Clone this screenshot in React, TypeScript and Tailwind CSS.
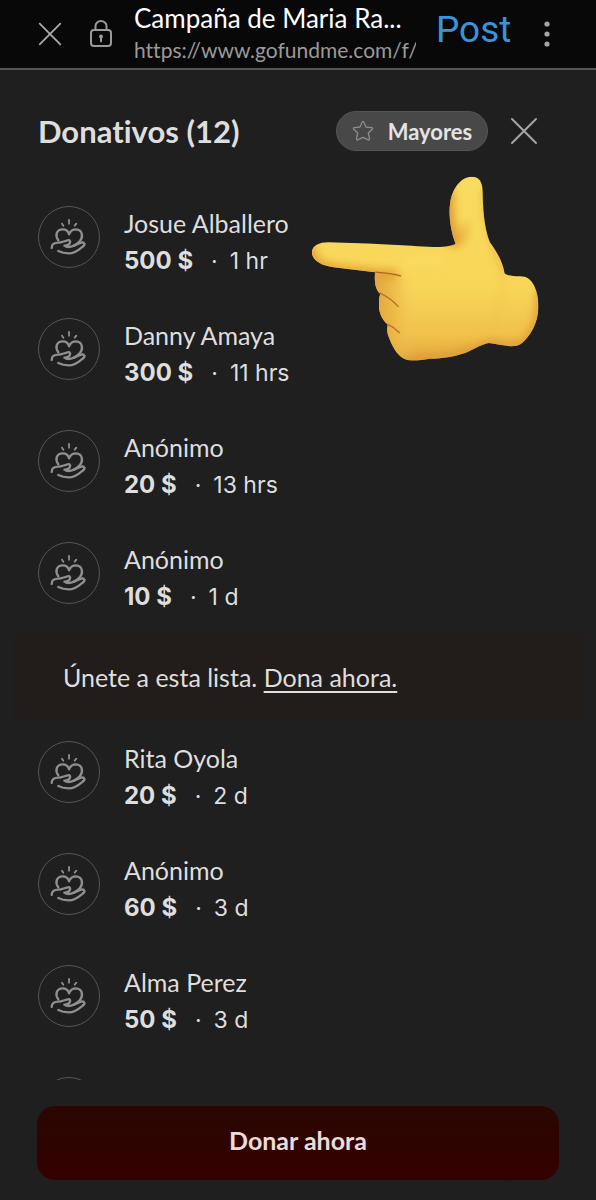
type Donation = { name: string; amount: string; time: string };

const topDonations: Donation[] = [
  { name: "Josue Alballero", amount: "500 $", time: "1 hr" },
  { name: "Danny Amaya", amount: "300 $", time: "11 hrs" },
  { name: "Anónimo", amount: "20 $", time: "13 hrs" },
  { name: "Anónimo", amount: "10 $", time: "1 d" },
];

const moreDonations: Donation[] = [
  { name: "Rita Oyola", amount: "20 $", time: "2 d" },
  { name: "Anónimo", amount: "60 $", time: "3 d" },
  { name: "Alma Perez", amount: "50 $", time: "3 d" },
];

function CloseIcon({ className }: { className: string }) {
  return (
    <svg viewBox="0 0 28 28" className={className} fill="none" stroke="currentColor" strokeWidth="2" strokeLinecap="round" aria-hidden="true">
      <path d="M2 2L26 26M26 2L2 26" />
    </svg>
  );
}

function LockIcon() {
  return (
    <svg viewBox="0 0 22 28" className="h-7 w-[22px] shrink-0 text-[#9a9a9a]" fill="none" stroke="currentColor" strokeWidth="2" aria-hidden="true">
      <rect x="1" y="10" width="20" height="16" rx="3" />
      <path d="M5.500 10V6a5.500 5 0 0 1 11 0V10" />
      <circle cx="11" cy="16.500" r="2" fill="currentColor" stroke="none" />
      <path d="M11 17v4.500" strokeLinecap="round" strokeWidth="2" />
    </svg>
  );
}

function GivingIcon() {
  return (
    <svg viewBox="148 384 114 114" className="size-[38px]" fill="none" stroke="currentColor" strokeWidth="7" strokeLinecap="round" strokeLinejoin="round" aria-hidden="true">
      <path d="M205 390v11M184 401l4 6M227 401l-5 6" strokeWidth="5.500" />
      <path d="M173 451C163 438 166 418 186 418C197 418 203 425 205 433C208 425 215 418 226 418C246 419 248 441 238 453C233 459 227 463 220 467" />
      <path d="M153 474C153 462 162 458 173 458C184 458 190 453 201 451C209 450 210 455 207 460C204 465 198 467 191 467C199 473 211 471 221 466L241 458C250 456 255 462 248 468C236 478 224 490 205 490C192 490 182 488 173 483" />
    </svg>
  );
}

function PointingHand() {
  return (
    <svg viewBox="40 255 690 565" className="pointer-events-none absolute top-[105px] left-[311px] h-[188px] w-[230px]" role="img" aria-label="Mano señalando">
      <defs>
        <linearGradient id="palm" x1="0" y1="0" x2="0" y2="1">
          <stop offset="0" stopColor="#f8dc60" />
          <stop offset="0.6" stopColor="#f8d658" />
          <stop offset="0.85" stopColor="#f1c14b" />
          <stop offset="1" stopColor="#e2a53c" />
        </linearGradient>
        <linearGradient id="fingers" gradientUnits="userSpaceOnUse" x1="230" y1="0" x2="350" y2="0">
          <stop offset="0" stopColor="#e0a03a" stopOpacity="0.9" />
          <stop offset="0.5" stopColor="#e9b244" stopOpacity="0.7" />
          <stop offset="1" stopColor="#f6ce52" stopOpacity="0" />
        </linearGradient>
        <filter id="soft" x="-30%" y="-30%" width="160%" height="160%">
          <feGaussianBlur stdDeviation="12" />
        </filter>
        <clipPath id="hand">
          <path d="M42 487C43 467 64 457 91 457L210 461L342 468C395 473 447 474 474 462C458 422 452 373 458 336C465 291 493 260 523 260C546 260 554 277 555 302C556 353 559 411 577 457C601 490 616 519 621 550C635 562 657 558 681 561C707 567 723 606 723 650C722 701 699 739 670 763C646 778 608 763 573 760C550 765 531 778 505 789C463 803 428 807 396 807C365 812 342 817 319 807C296 796 281 764 273 741C267 727 268 715 270 704C252 690 242 664 244 644C243 631 244 623 248 613C230 598 230 568 232 547L107 532C72 528 42 512 42 487Z" />
        </clipPath>
      </defs>
      <g clipPath="url(#hand)">
        <rect x="40" y="255" width="690" height="565" fill="url(#palm)" />
        <g filter="url(#soft)" fill="none">
          <path d="M200 560H360V840H200Z" fill="url(#fingers)" />
          <path d="M40 505C70 536 150 540 235 549L300 554" stroke="#df9b32" strokeWidth="22" />
          <path d="M40 470V510" stroke="#e3a338" strokeWidth="36" />
          <path d="M452 300C450 400 460 440 476 468" stroke="#dd9832" strokeWidth="32" />
          <path d="M500 400C504 425 496 445 484 460" stroke="#e3a53a" strokeWidth="26" opacity="0.6" />
          <path d="M560 300C562 370 574 440 625 550" stroke="#e7ad3f" strokeWidth="12" />
          <path d="M725 600C730 680 710 740 670 766C630 776 600 762 573 762C500 800 400 812 310 812" stroke="#dc9735" strokeWidth="20" />
          <path d="M622 552C612 620 600 700 570 755" stroke="#efbd48" strokeWidth="18" opacity="0.35" />
          <path d="M320 525C360 510 400 510 430 520" stroke="#ffe268" strokeWidth="26" opacity="0.5" />
        </g>
      </g>
      <g fill="none" strokeLinecap="round">
        <path d="M234 547C262 549 286 552 309 558" stroke="#ac6522" strokeWidth="4" />
        <path d="M247 610C268 620 287 634 301 650" stroke="#b97028" strokeWidth="4" />
        <path d="M270 704C284 710 296 719 305 729" stroke="#b97028" strokeWidth="4" />
      </g>
    </svg>
  );
}

function Avatar() {
  return (
    <div className="flex size-[62px] shrink-0 items-center justify-center rounded-full border border-[#555] text-[#8f8f8f]">
      <GivingIcon />
    </div>
  );
}

function DonationRow({ name, amount, time }: Donation) {
  return (
    <li className="flex h-[62px] gap-6">
      <Avatar />
      <div className="flex flex-col gap-1 leading-[34px] text-[#dedede]">
        <p className="text-[25px]">{name}</p>
        <p className="flex items-baseline font-['Inter',sans-serif]">
          <strong className="text-2xl font-bold">{amount}</strong>
          <span className="mr-3 ml-[18px] text-[23px]">·</span>
          <span className="text-[23px]">{time}</span>
        </p>
      </div>
    </li>
  );
}

export default function App() {
  return (
    <div className="flex h-screen flex-col overflow-hidden bg-[#1f1f1f] font-['Lato',sans-serif] [font-variant-ligatures:none]">
      <header className="flex h-[70px] shrink-0 items-center border-b-2 border-[#555] bg-[#080808] pr-[33px] pl-[38px]">
        <button type="button" aria-label="Cerrar página" className="text-[#adadad]">
          <CloseIcon className="size-6" />
        </button>
        <div className="mr-[22px] ml-7 flex">
          <LockIcon />
        </div>
        <div className="w-[282px] min-w-0">
          <p className="truncate text-[26px] leading-8 text-white">Campaña de Maria Ra...</p>
          <p className="overflow-hidden text-[21px] leading-8 whitespace-nowrap text-[#9a9a9a]">https://www.gofundme.com/f/v</p>
        </div>
        <button type="button" className="ml-5 pb-2 font-['Roboto',sans-serif] text-[37px] text-[#3a94dc]">
          Post
        </button>
        <button type="button" aria-label="Más opciones" className="ml-auto flex h-7 w-8 items-center justify-center text-[#a5a5a5]">
          <svg viewBox="0 0 6 26" className="h-[26px] w-[6px]" fill="currentColor" aria-hidden="true">
            <circle cx="3" cy="3" r="2.600" />
            <circle cx="3" cy="13" r="2.600" />
            <circle cx="3" cy="23" r="2.600" />
          </svg>
        </button>
      </header>

      <main className="relative flex min-h-0 flex-1 flex-col">
        <div className="mt-[41px] flex h-10 shrink-0 items-center pr-[58px] pl-[38px]">
          <h1 className="flex-1 text-[31px] font-bold text-[#dedede]">Donativos (12)</h1>
          <button type="button" className="flex h-10 w-[152px] items-center justify-center gap-[14px] rounded-full border border-[#555] bg-[#484848] text-[22px] font-bold text-[#e3e3e3]">
            <svg viewBox="0 0 22 22" className="size-[22px] shrink-0 text-[#8c8c8c]" fill="none" stroke="currentColor" strokeWidth="1.300" strokeLinejoin="round" aria-hidden="true">
              <path d="M10.200 2Q11 .8 11.800 2L14 7l5.700.7Q21.200 8 20.200 9.200L16.300 13l1.200 5.600Q17.600 20.400 16.200 19.900L11 17.300l-5.200 2.600Q4.400 20.400 4.500 18.600L5.700 13 1.800 9.200Q.8 8 2.300 7.700L8 7Z" />
            </svg>
            Mayores
          </button>
          <button type="button" aria-label="Cerrar donativos" className="ml-[22px] text-[#a5a5a5]">
            <CloseIcon className="size-7" />
          </button>
        </div>

        <div className="mt-[55px] min-h-0 flex-1 overflow-hidden">
          <ul className="flex flex-col gap-[50px] px-[38px]">
            {topDonations.map((d, i) => (
              <DonationRow key={i} {...d} />
            ))}
          </ul>
          <p className="mx-[13px] mt-[30px] mb-[19px] flex h-[88px] items-center bg-[#221d1b] px-[50px] text-[25px] text-[#dedede]">
            <span>
              Únete a esta lista.{" "}
              <a href="#donar" className="underline decoration-2 underline-offset-4">
                Dona ahora.
              </a>
            </span>
          </p>
          <ul className="flex flex-col gap-[50px] px-[38px]">
            {moreDonations.map((d, i) => (
              <DonationRow key={i} {...d} />
            ))}
            <li>
              <Avatar />
            </li>
          </ul>
        </div>
        <PointingHand />
      </main>

      <footer className="shrink-0 px-[37px] pt-[26px] pb-5">
        <button id="donar" type="button" className="h-[74px] w-full rounded-[18px] bg-linear-to-b from-[#2b0700] to-[#330000] pb-1 text-[25px] font-bold text-[#eadcda]">
          Donar ahora
        </button>
      </footer>
    </div>
  );
}
